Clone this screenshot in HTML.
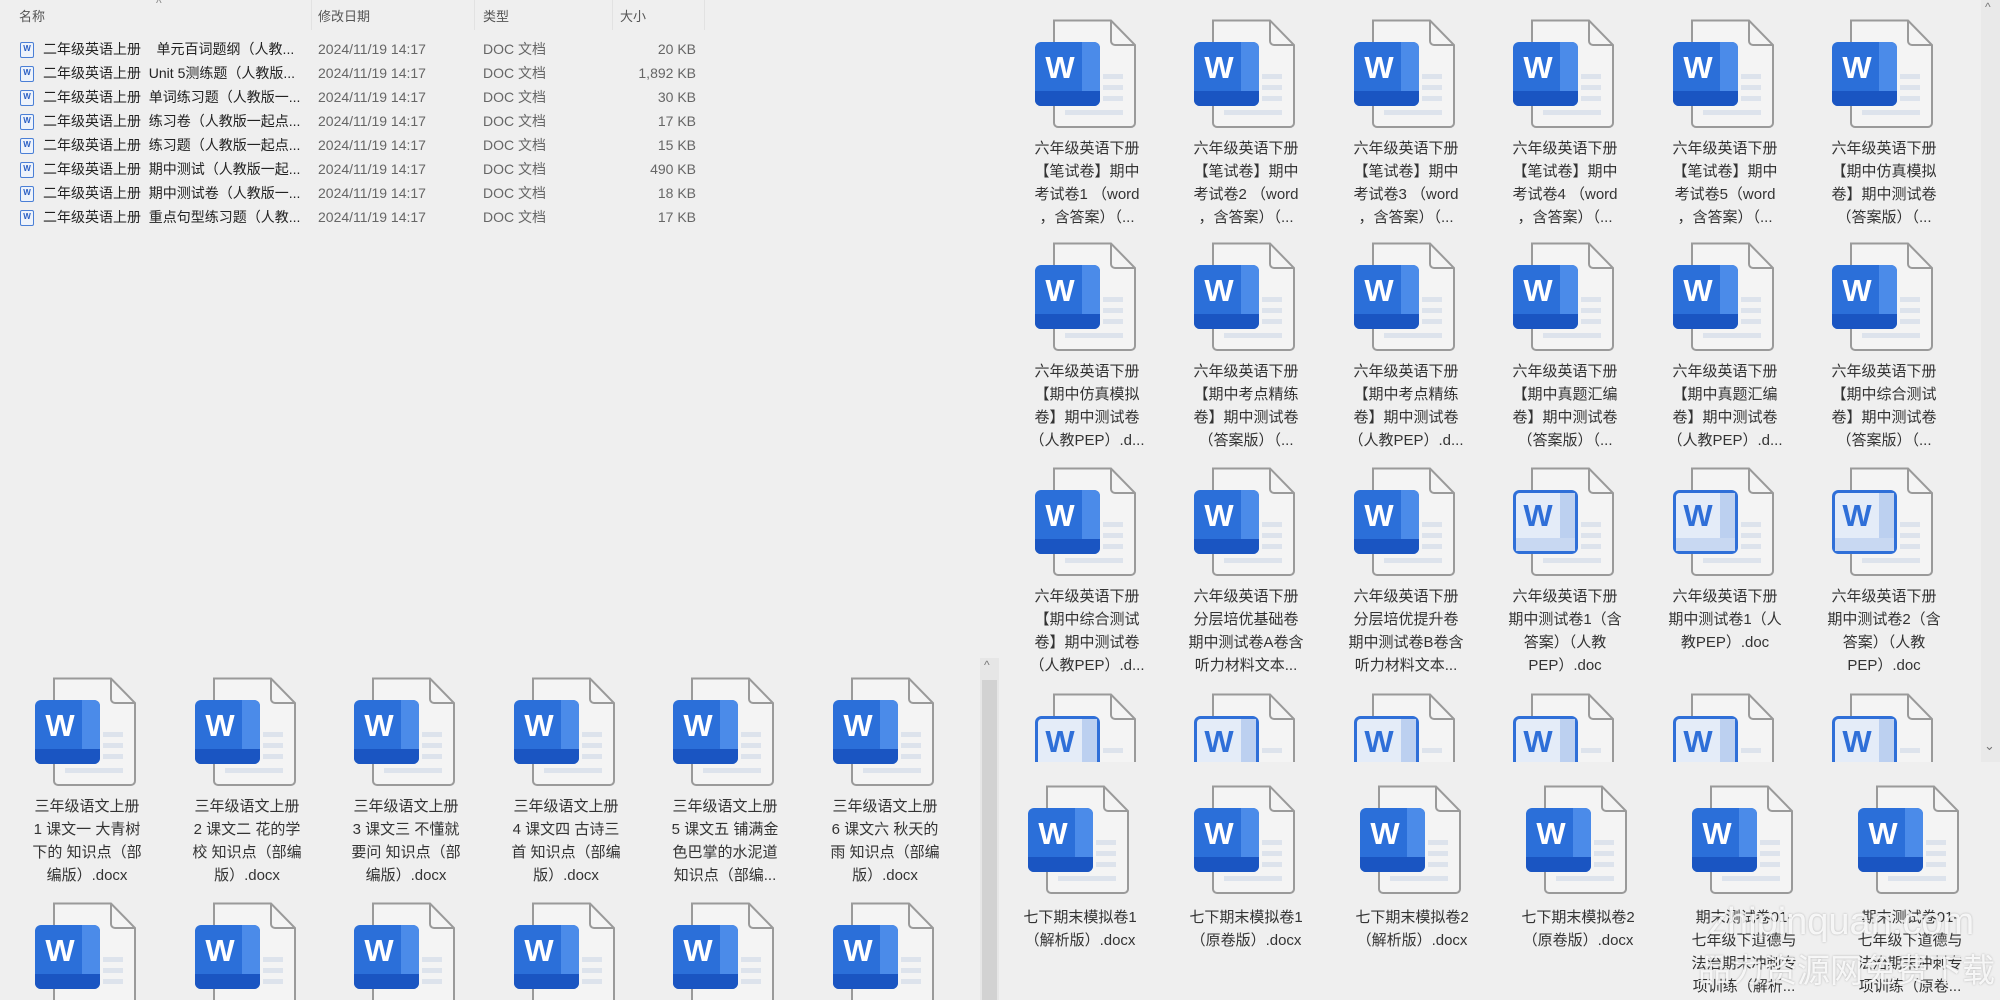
<!DOCTYPE html>
<html><head><meta charset="utf-8">
<style>
*{margin:0;padding:0;box-sizing:border-box}
html{width:2000px;height:1000px;overflow:hidden}
body{width:2000px;height:1000px;overflow:hidden;background:#efefef;font-family:"Liberation Sans","Noto Sans CJK SC",sans-serif;position:relative;color:#333}
.hd{position:absolute;top:6px;font-size:13px;color:#555}
.dv{position:absolute;top:0;width:1px;height:30px;background:#e2e2e2}
.row{position:absolute;left:0;height:24px;font-size:14px;line-height:24px;width:720px}
.row span{position:absolute;white-space:nowrap}
.row .n{left:43px;color:#222}
.row .d{left:318px;color:#666}
.row .ty{left:483px;color:#666}
.row .s{right:24px;color:#666}
.ic{position:absolute;left:20px;top:5px;width:14px;height:16px;border:1.5px solid #4a7fd6;border-radius:2px;background:#eef3fb;font-size:8px;line-height:12px;text-align:center;color:#2a5fc4;font-weight:bold}
.it{position:absolute;width:110px;height:230px}
.it svg{position:absolute;left:0;top:0;overflow:visible}
.t{position:absolute;left:-20px;top:118px;width:144px;text-align:center;font-size:15px;line-height:23px;color:#333;white-space:nowrap}
.clip{position:absolute;overflow:hidden}
.wm{position:absolute;color:rgba(255,255,255,0.85);text-shadow:0 0 2px rgba(0,0,0,0.25);white-space:nowrap}
</style></head><body>

<div class="hd" style="left:19px">名称</div>
<div class="hd" style="left:156px;top:-4px;font-size:12px;color:#888">^</div>
<div class="dv" style="left:311px"></div>
<div class="hd" style="left:318px">修改日期</div>
<div class="dv" style="left:474px"></div>
<div class="hd" style="left:483px">类型</div>
<div class="dv" style="left:612px"></div>
<div class="hd" style="left:620px">大小</div>
<div class="dv" style="left:704px"></div>

<div class="row" style="top:37px"><div class="ic">W</div><span class="n">二年级英语上册&nbsp;&nbsp;&nbsp;&nbsp;单元百词题纲（人教...</span><span class="d">2024/11/19 14:17</span><span class="ty">DOC 文档</span><span class="s">20 KB</span></div>
<div class="row" style="top:61px"><div class="ic">W</div><span class="n">二年级英语上册&nbsp;&nbsp;Unit 5测练题（人教版...</span><span class="d">2024/11/19 14:17</span><span class="ty">DOC 文档</span><span class="s">1,892 KB</span></div>
<div class="row" style="top:85px"><div class="ic">W</div><span class="n">二年级英语上册&nbsp;&nbsp;单词练习题（人教版一...</span><span class="d">2024/11/19 14:17</span><span class="ty">DOC 文档</span><span class="s">30 KB</span></div>
<div class="row" style="top:109px"><div class="ic">W</div><span class="n">二年级英语上册&nbsp;&nbsp;练习卷（人教版一起点...</span><span class="d">2024/11/19 14:17</span><span class="ty">DOC 文档</span><span class="s">17 KB</span></div>
<div class="row" style="top:133px"><div class="ic">W</div><span class="n">二年级英语上册&nbsp;&nbsp;练习题（人教版一起点...</span><span class="d">2024/11/19 14:17</span><span class="ty">DOC 文档</span><span class="s">15 KB</span></div>
<div class="row" style="top:157px"><div class="ic">W</div><span class="n">二年级英语上册&nbsp;&nbsp;期中测试（人教版一起...</span><span class="d">2024/11/19 14:17</span><span class="ty">DOC 文档</span><span class="s">490 KB</span></div>
<div class="row" style="top:181px"><div class="ic">W</div><span class="n">二年级英语上册&nbsp;&nbsp;期中测试卷（人教版一...</span><span class="d">2024/11/19 14:17</span><span class="ty">DOC 文档</span><span class="s">18 KB</span></div>
<div class="row" style="top:205px"><div class="ic">W</div><span class="n">二年级英语上册&nbsp;&nbsp;重点句型练习题（人教...</span><span class="d">2024/11/19 14:17</span><span class="ty">DOC 文档</span><span class="s">17 KB</span></div>

<div class="clip" style="left:0;top:0;width:2000px;height:762px">
<div style="position:absolute;left:1981px;top:0;width:19px;height:762px;background:#e9e9e9"></div>
<div style="position:absolute;left:1985px;top:0;font-size:12px;color:#777">^</div>
<div style="position:absolute;left:1984px;top:738px;font-size:13px;color:#777">⌄</div>

<div class="it" style="left:1035px;top:19px"><svg width="102" height="112"><path d="M19 1.5H76L100 26V104a4 4 0 0 1-4 4H23a4 4 0 0 1-4-4Z" fill="#f4f4f4" stroke="#9a9a9a" stroke-width="2"/><path d="M76 1.5V22a4 4 0 0 0 4 4H100" fill="none" stroke="#9a9a9a" stroke-width="2"/><g fill="#dde3ec"><rect x="68" y="55" width="20" height="5"/><rect x="68" y="66" width="20" height="5"/><rect x="68" y="77" width="20" height="5"/><rect x="30" y="91" width="58" height="5"/></g><rect x="0" y="23" width="65" height="64" rx="6" fill="#2b6fd9"/><path d="M47 23H59a6 6 0 0 1 6 6V72H47Z" fill="#4b8be9"/><path d="M0 72H65V81a6 6 0 0 1-6 6H6a6 6 0 0 1-6-6Z" fill="#1a55c2"/><text x="25" y="59" font-family="Liberation Sans" font-weight="bold" font-size="31" fill="#fff" text-anchor="middle">W</text></svg><div class="t">六年级英语下册<br>【笔试卷】期中<br>考试卷1 （word<br>，含答案）（...</div></div>
<div class="it" style="left:1194px;top:19px"><svg width="102" height="112"><path d="M19 1.5H76L100 26V104a4 4 0 0 1-4 4H23a4 4 0 0 1-4-4Z" fill="#f4f4f4" stroke="#9a9a9a" stroke-width="2"/><path d="M76 1.5V22a4 4 0 0 0 4 4H100" fill="none" stroke="#9a9a9a" stroke-width="2"/><g fill="#dde3ec"><rect x="68" y="55" width="20" height="5"/><rect x="68" y="66" width="20" height="5"/><rect x="68" y="77" width="20" height="5"/><rect x="30" y="91" width="58" height="5"/></g><rect x="0" y="23" width="65" height="64" rx="6" fill="#2b6fd9"/><path d="M47 23H59a6 6 0 0 1 6 6V72H47Z" fill="#4b8be9"/><path d="M0 72H65V81a6 6 0 0 1-6 6H6a6 6 0 0 1-6-6Z" fill="#1a55c2"/><text x="25" y="59" font-family="Liberation Sans" font-weight="bold" font-size="31" fill="#fff" text-anchor="middle">W</text></svg><div class="t">六年级英语下册<br>【笔试卷】期中<br>考试卷2 （word<br>，含答案）（...</div></div>
<div class="it" style="left:1354px;top:19px"><svg width="102" height="112"><path d="M19 1.5H76L100 26V104a4 4 0 0 1-4 4H23a4 4 0 0 1-4-4Z" fill="#f4f4f4" stroke="#9a9a9a" stroke-width="2"/><path d="M76 1.5V22a4 4 0 0 0 4 4H100" fill="none" stroke="#9a9a9a" stroke-width="2"/><g fill="#dde3ec"><rect x="68" y="55" width="20" height="5"/><rect x="68" y="66" width="20" height="5"/><rect x="68" y="77" width="20" height="5"/><rect x="30" y="91" width="58" height="5"/></g><rect x="0" y="23" width="65" height="64" rx="6" fill="#2b6fd9"/><path d="M47 23H59a6 6 0 0 1 6 6V72H47Z" fill="#4b8be9"/><path d="M0 72H65V81a6 6 0 0 1-6 6H6a6 6 0 0 1-6-6Z" fill="#1a55c2"/><text x="25" y="59" font-family="Liberation Sans" font-weight="bold" font-size="31" fill="#fff" text-anchor="middle">W</text></svg><div class="t">六年级英语下册<br>【笔试卷】期中<br>考试卷3 （word<br>，含答案）（...</div></div>
<div class="it" style="left:1513px;top:19px"><svg width="102" height="112"><path d="M19 1.5H76L100 26V104a4 4 0 0 1-4 4H23a4 4 0 0 1-4-4Z" fill="#f4f4f4" stroke="#9a9a9a" stroke-width="2"/><path d="M76 1.5V22a4 4 0 0 0 4 4H100" fill="none" stroke="#9a9a9a" stroke-width="2"/><g fill="#dde3ec"><rect x="68" y="55" width="20" height="5"/><rect x="68" y="66" width="20" height="5"/><rect x="68" y="77" width="20" height="5"/><rect x="30" y="91" width="58" height="5"/></g><rect x="0" y="23" width="65" height="64" rx="6" fill="#2b6fd9"/><path d="M47 23H59a6 6 0 0 1 6 6V72H47Z" fill="#4b8be9"/><path d="M0 72H65V81a6 6 0 0 1-6 6H6a6 6 0 0 1-6-6Z" fill="#1a55c2"/><text x="25" y="59" font-family="Liberation Sans" font-weight="bold" font-size="31" fill="#fff" text-anchor="middle">W</text></svg><div class="t">六年级英语下册<br>【笔试卷】期中<br>考试卷4 （word<br>，含答案）（...</div></div>
<div class="it" style="left:1673px;top:19px"><svg width="102" height="112"><path d="M19 1.5H76L100 26V104a4 4 0 0 1-4 4H23a4 4 0 0 1-4-4Z" fill="#f4f4f4" stroke="#9a9a9a" stroke-width="2"/><path d="M76 1.5V22a4 4 0 0 0 4 4H100" fill="none" stroke="#9a9a9a" stroke-width="2"/><g fill="#dde3ec"><rect x="68" y="55" width="20" height="5"/><rect x="68" y="66" width="20" height="5"/><rect x="68" y="77" width="20" height="5"/><rect x="30" y="91" width="58" height="5"/></g><rect x="0" y="23" width="65" height="64" rx="6" fill="#2b6fd9"/><path d="M47 23H59a6 6 0 0 1 6 6V72H47Z" fill="#4b8be9"/><path d="M0 72H65V81a6 6 0 0 1-6 6H6a6 6 0 0 1-6-6Z" fill="#1a55c2"/><text x="25" y="59" font-family="Liberation Sans" font-weight="bold" font-size="31" fill="#fff" text-anchor="middle">W</text></svg><div class="t">六年级英语下册<br>【笔试卷】期中<br>考试卷5（word<br>，含答案）（...</div></div>
<div class="it" style="left:1832px;top:19px"><svg width="102" height="112"><path d="M19 1.5H76L100 26V104a4 4 0 0 1-4 4H23a4 4 0 0 1-4-4Z" fill="#f4f4f4" stroke="#9a9a9a" stroke-width="2"/><path d="M76 1.5V22a4 4 0 0 0 4 4H100" fill="none" stroke="#9a9a9a" stroke-width="2"/><g fill="#dde3ec"><rect x="68" y="55" width="20" height="5"/><rect x="68" y="66" width="20" height="5"/><rect x="68" y="77" width="20" height="5"/><rect x="30" y="91" width="58" height="5"/></g><rect x="0" y="23" width="65" height="64" rx="6" fill="#2b6fd9"/><path d="M47 23H59a6 6 0 0 1 6 6V72H47Z" fill="#4b8be9"/><path d="M0 72H65V81a6 6 0 0 1-6 6H6a6 6 0 0 1-6-6Z" fill="#1a55c2"/><text x="25" y="59" font-family="Liberation Sans" font-weight="bold" font-size="31" fill="#fff" text-anchor="middle">W</text></svg><div class="t">六年级英语下册<br>【期中仿真模拟<br>卷】期中测试卷<br>（答案版）（...</div></div>

<div class="it" style="left:1035px;top:242px"><svg width="102" height="112"><path d="M19 1.5H76L100 26V104a4 4 0 0 1-4 4H23a4 4 0 0 1-4-4Z" fill="#f4f4f4" stroke="#9a9a9a" stroke-width="2"/><path d="M76 1.5V22a4 4 0 0 0 4 4H100" fill="none" stroke="#9a9a9a" stroke-width="2"/><g fill="#dde3ec"><rect x="68" y="55" width="20" height="5"/><rect x="68" y="66" width="20" height="5"/><rect x="68" y="77" width="20" height="5"/><rect x="30" y="91" width="58" height="5"/></g><rect x="0" y="23" width="65" height="64" rx="6" fill="#2b6fd9"/><path d="M47 23H59a6 6 0 0 1 6 6V72H47Z" fill="#4b8be9"/><path d="M0 72H65V81a6 6 0 0 1-6 6H6a6 6 0 0 1-6-6Z" fill="#1a55c2"/><text x="25" y="59" font-family="Liberation Sans" font-weight="bold" font-size="31" fill="#fff" text-anchor="middle">W</text></svg><div class="t">六年级英语下册<br>【期中仿真模拟<br>卷】期中测试卷<br>（人教PEP）.d...</div></div>
<div class="it" style="left:1194px;top:242px"><svg width="102" height="112"><path d="M19 1.5H76L100 26V104a4 4 0 0 1-4 4H23a4 4 0 0 1-4-4Z" fill="#f4f4f4" stroke="#9a9a9a" stroke-width="2"/><path d="M76 1.5V22a4 4 0 0 0 4 4H100" fill="none" stroke="#9a9a9a" stroke-width="2"/><g fill="#dde3ec"><rect x="68" y="55" width="20" height="5"/><rect x="68" y="66" width="20" height="5"/><rect x="68" y="77" width="20" height="5"/><rect x="30" y="91" width="58" height="5"/></g><rect x="0" y="23" width="65" height="64" rx="6" fill="#2b6fd9"/><path d="M47 23H59a6 6 0 0 1 6 6V72H47Z" fill="#4b8be9"/><path d="M0 72H65V81a6 6 0 0 1-6 6H6a6 6 0 0 1-6-6Z" fill="#1a55c2"/><text x="25" y="59" font-family="Liberation Sans" font-weight="bold" font-size="31" fill="#fff" text-anchor="middle">W</text></svg><div class="t">六年级英语下册<br>【期中考点精练<br>卷】期中测试卷<br>（答案版）（...</div></div>
<div class="it" style="left:1354px;top:242px"><svg width="102" height="112"><path d="M19 1.5H76L100 26V104a4 4 0 0 1-4 4H23a4 4 0 0 1-4-4Z" fill="#f4f4f4" stroke="#9a9a9a" stroke-width="2"/><path d="M76 1.5V22a4 4 0 0 0 4 4H100" fill="none" stroke="#9a9a9a" stroke-width="2"/><g fill="#dde3ec"><rect x="68" y="55" width="20" height="5"/><rect x="68" y="66" width="20" height="5"/><rect x="68" y="77" width="20" height="5"/><rect x="30" y="91" width="58" height="5"/></g><rect x="0" y="23" width="65" height="64" rx="6" fill="#2b6fd9"/><path d="M47 23H59a6 6 0 0 1 6 6V72H47Z" fill="#4b8be9"/><path d="M0 72H65V81a6 6 0 0 1-6 6H6a6 6 0 0 1-6-6Z" fill="#1a55c2"/><text x="25" y="59" font-family="Liberation Sans" font-weight="bold" font-size="31" fill="#fff" text-anchor="middle">W</text></svg><div class="t">六年级英语下册<br>【期中考点精练<br>卷】期中测试卷<br>（人教PEP）.d...</div></div>
<div class="it" style="left:1513px;top:242px"><svg width="102" height="112"><path d="M19 1.5H76L100 26V104a4 4 0 0 1-4 4H23a4 4 0 0 1-4-4Z" fill="#f4f4f4" stroke="#9a9a9a" stroke-width="2"/><path d="M76 1.5V22a4 4 0 0 0 4 4H100" fill="none" stroke="#9a9a9a" stroke-width="2"/><g fill="#dde3ec"><rect x="68" y="55" width="20" height="5"/><rect x="68" y="66" width="20" height="5"/><rect x="68" y="77" width="20" height="5"/><rect x="30" y="91" width="58" height="5"/></g><rect x="0" y="23" width="65" height="64" rx="6" fill="#2b6fd9"/><path d="M47 23H59a6 6 0 0 1 6 6V72H47Z" fill="#4b8be9"/><path d="M0 72H65V81a6 6 0 0 1-6 6H6a6 6 0 0 1-6-6Z" fill="#1a55c2"/><text x="25" y="59" font-family="Liberation Sans" font-weight="bold" font-size="31" fill="#fff" text-anchor="middle">W</text></svg><div class="t">六年级英语下册<br>【期中真题汇编<br>卷】期中测试卷<br>（答案版）（...</div></div>
<div class="it" style="left:1673px;top:242px"><svg width="102" height="112"><path d="M19 1.5H76L100 26V104a4 4 0 0 1-4 4H23a4 4 0 0 1-4-4Z" fill="#f4f4f4" stroke="#9a9a9a" stroke-width="2"/><path d="M76 1.5V22a4 4 0 0 0 4 4H100" fill="none" stroke="#9a9a9a" stroke-width="2"/><g fill="#dde3ec"><rect x="68" y="55" width="20" height="5"/><rect x="68" y="66" width="20" height="5"/><rect x="68" y="77" width="20" height="5"/><rect x="30" y="91" width="58" height="5"/></g><rect x="0" y="23" width="65" height="64" rx="6" fill="#2b6fd9"/><path d="M47 23H59a6 6 0 0 1 6 6V72H47Z" fill="#4b8be9"/><path d="M0 72H65V81a6 6 0 0 1-6 6H6a6 6 0 0 1-6-6Z" fill="#1a55c2"/><text x="25" y="59" font-family="Liberation Sans" font-weight="bold" font-size="31" fill="#fff" text-anchor="middle">W</text></svg><div class="t">六年级英语下册<br>【期中真题汇编<br>卷】期中测试卷<br>（人教PEP）.d...</div></div>
<div class="it" style="left:1832px;top:242px"><svg width="102" height="112"><path d="M19 1.5H76L100 26V104a4 4 0 0 1-4 4H23a4 4 0 0 1-4-4Z" fill="#f4f4f4" stroke="#9a9a9a" stroke-width="2"/><path d="M76 1.5V22a4 4 0 0 0 4 4H100" fill="none" stroke="#9a9a9a" stroke-width="2"/><g fill="#dde3ec"><rect x="68" y="55" width="20" height="5"/><rect x="68" y="66" width="20" height="5"/><rect x="68" y="77" width="20" height="5"/><rect x="30" y="91" width="58" height="5"/></g><rect x="0" y="23" width="65" height="64" rx="6" fill="#2b6fd9"/><path d="M47 23H59a6 6 0 0 1 6 6V72H47Z" fill="#4b8be9"/><path d="M0 72H65V81a6 6 0 0 1-6 6H6a6 6 0 0 1-6-6Z" fill="#1a55c2"/><text x="25" y="59" font-family="Liberation Sans" font-weight="bold" font-size="31" fill="#fff" text-anchor="middle">W</text></svg><div class="t">六年级英语下册<br>【期中综合测试<br>卷】期中测试卷<br>（答案版）（...</div></div>

<div class="it" style="left:1035px;top:467px"><svg width="102" height="112"><path d="M19 1.5H76L100 26V104a4 4 0 0 1-4 4H23a4 4 0 0 1-4-4Z" fill="#f4f4f4" stroke="#9a9a9a" stroke-width="2"/><path d="M76 1.5V22a4 4 0 0 0 4 4H100" fill="none" stroke="#9a9a9a" stroke-width="2"/><g fill="#dde3ec"><rect x="68" y="55" width="20" height="5"/><rect x="68" y="66" width="20" height="5"/><rect x="68" y="77" width="20" height="5"/><rect x="30" y="91" width="58" height="5"/></g><rect x="0" y="23" width="65" height="64" rx="6" fill="#2b6fd9"/><path d="M47 23H59a6 6 0 0 1 6 6V72H47Z" fill="#4b8be9"/><path d="M0 72H65V81a6 6 0 0 1-6 6H6a6 6 0 0 1-6-6Z" fill="#1a55c2"/><text x="25" y="59" font-family="Liberation Sans" font-weight="bold" font-size="31" fill="#fff" text-anchor="middle">W</text></svg><div class="t">六年级英语下册<br>【期中综合测试<br>卷】期中测试卷<br>（人教PEP）.d...</div></div>
<div class="it" style="left:1194px;top:467px"><svg width="102" height="112"><path d="M19 1.5H76L100 26V104a4 4 0 0 1-4 4H23a4 4 0 0 1-4-4Z" fill="#f4f4f4" stroke="#9a9a9a" stroke-width="2"/><path d="M76 1.5V22a4 4 0 0 0 4 4H100" fill="none" stroke="#9a9a9a" stroke-width="2"/><g fill="#dde3ec"><rect x="68" y="55" width="20" height="5"/><rect x="68" y="66" width="20" height="5"/><rect x="68" y="77" width="20" height="5"/><rect x="30" y="91" width="58" height="5"/></g><rect x="0" y="23" width="65" height="64" rx="6" fill="#2b6fd9"/><path d="M47 23H59a6 6 0 0 1 6 6V72H47Z" fill="#4b8be9"/><path d="M0 72H65V81a6 6 0 0 1-6 6H6a6 6 0 0 1-6-6Z" fill="#1a55c2"/><text x="25" y="59" font-family="Liberation Sans" font-weight="bold" font-size="31" fill="#fff" text-anchor="middle">W</text></svg><div class="t">六年级英语下册<br>分层培优基础卷<br>期中测试卷A卷含<br>听力材料文本...</div></div>
<div class="it" style="left:1354px;top:467px"><svg width="102" height="112"><path d="M19 1.5H76L100 26V104a4 4 0 0 1-4 4H23a4 4 0 0 1-4-4Z" fill="#f4f4f4" stroke="#9a9a9a" stroke-width="2"/><path d="M76 1.5V22a4 4 0 0 0 4 4H100" fill="none" stroke="#9a9a9a" stroke-width="2"/><g fill="#dde3ec"><rect x="68" y="55" width="20" height="5"/><rect x="68" y="66" width="20" height="5"/><rect x="68" y="77" width="20" height="5"/><rect x="30" y="91" width="58" height="5"/></g><rect x="0" y="23" width="65" height="64" rx="6" fill="#2b6fd9"/><path d="M47 23H59a6 6 0 0 1 6 6V72H47Z" fill="#4b8be9"/><path d="M0 72H65V81a6 6 0 0 1-6 6H6a6 6 0 0 1-6-6Z" fill="#1a55c2"/><text x="25" y="59" font-family="Liberation Sans" font-weight="bold" font-size="31" fill="#fff" text-anchor="middle">W</text></svg><div class="t">六年级英语下册<br>分层培优提升卷<br>期中测试卷B卷含<br>听力材料文本...</div></div>
<div class="it" style="left:1513px;top:467px"><svg width="102" height="112"><path d="M19 1.5H76L100 26V104a4 4 0 0 1-4 4H23a4 4 0 0 1-4-4Z" fill="#f4f4f4" stroke="#9a9a9a" stroke-width="2"/><path d="M76 1.5V22a4 4 0 0 0 4 4H100" fill="none" stroke="#9a9a9a" stroke-width="2"/><g fill="#dde3ec"><rect x="68" y="55" width="20" height="5"/><rect x="68" y="66" width="20" height="5"/><rect x="68" y="77" width="20" height="5"/><rect x="30" y="91" width="58" height="5"/></g><rect x="1.5" y="24.5" width="62" height="61" rx="5" fill="#e4ecf8" stroke="#2f6fd8" stroke-width="3"/><rect x="47" y="26" width="15" height="45" fill="#bcd0f0"/><rect x="3" y="71" width="59" height="13" fill="#c8d8f2"/><text x="25" y="59" font-family="Liberation Sans" font-weight="bold" font-size="31" fill="#2f6fd8" text-anchor="middle">W</text></svg><div class="t">六年级英语下册<br>期中测试卷1（含<br>答案）（人教<br>PEP）.doc</div></div>
<div class="it" style="left:1673px;top:467px"><svg width="102" height="112"><path d="M19 1.5H76L100 26V104a4 4 0 0 1-4 4H23a4 4 0 0 1-4-4Z" fill="#f4f4f4" stroke="#9a9a9a" stroke-width="2"/><path d="M76 1.5V22a4 4 0 0 0 4 4H100" fill="none" stroke="#9a9a9a" stroke-width="2"/><g fill="#dde3ec"><rect x="68" y="55" width="20" height="5"/><rect x="68" y="66" width="20" height="5"/><rect x="68" y="77" width="20" height="5"/><rect x="30" y="91" width="58" height="5"/></g><rect x="1.5" y="24.5" width="62" height="61" rx="5" fill="#e4ecf8" stroke="#2f6fd8" stroke-width="3"/><rect x="47" y="26" width="15" height="45" fill="#bcd0f0"/><rect x="3" y="71" width="59" height="13" fill="#c8d8f2"/><text x="25" y="59" font-family="Liberation Sans" font-weight="bold" font-size="31" fill="#2f6fd8" text-anchor="middle">W</text></svg><div class="t">六年级英语下册<br>期中测试卷1（人<br>教PEP）.doc</div></div>
<div class="it" style="left:1832px;top:467px"><svg width="102" height="112"><path d="M19 1.5H76L100 26V104a4 4 0 0 1-4 4H23a4 4 0 0 1-4-4Z" fill="#f4f4f4" stroke="#9a9a9a" stroke-width="2"/><path d="M76 1.5V22a4 4 0 0 0 4 4H100" fill="none" stroke="#9a9a9a" stroke-width="2"/><g fill="#dde3ec"><rect x="68" y="55" width="20" height="5"/><rect x="68" y="66" width="20" height="5"/><rect x="68" y="77" width="20" height="5"/><rect x="30" y="91" width="58" height="5"/></g><rect x="1.5" y="24.5" width="62" height="61" rx="5" fill="#e4ecf8" stroke="#2f6fd8" stroke-width="3"/><rect x="47" y="26" width="15" height="45" fill="#bcd0f0"/><rect x="3" y="71" width="59" height="13" fill="#c8d8f2"/><text x="25" y="59" font-family="Liberation Sans" font-weight="bold" font-size="31" fill="#2f6fd8" text-anchor="middle">W</text></svg><div class="t">六年级英语下册<br>期中测试卷2（含<br>答案）（人教<br>PEP）.doc</div></div>

<div class="it" style="left:1035px;top:693px"><svg width="102" height="112"><path d="M19 1.5H76L100 26V104a4 4 0 0 1-4 4H23a4 4 0 0 1-4-4Z" fill="#f4f4f4" stroke="#9a9a9a" stroke-width="2"/><path d="M76 1.5V22a4 4 0 0 0 4 4H100" fill="none" stroke="#9a9a9a" stroke-width="2"/><g fill="#dde3ec"><rect x="68" y="55" width="20" height="5"/></g><rect x="1.5" y="24.5" width="62" height="61" rx="5" fill="#e4ecf8" stroke="#2f6fd8" stroke-width="3"/><rect x="47" y="26" width="15" height="45" fill="#bcd0f0"/><text x="25" y="59" font-family="Liberation Sans" font-weight="bold" font-size="31" fill="#2f6fd8" text-anchor="middle">W</text></svg></div>
<div class="it" style="left:1194px;top:693px"><svg width="102" height="112"><path d="M19 1.5H76L100 26V104a4 4 0 0 1-4 4H23a4 4 0 0 1-4-4Z" fill="#f4f4f4" stroke="#9a9a9a" stroke-width="2"/><path d="M76 1.5V22a4 4 0 0 0 4 4H100" fill="none" stroke="#9a9a9a" stroke-width="2"/><g fill="#dde3ec"><rect x="68" y="55" width="20" height="5"/></g><rect x="1.5" y="24.5" width="62" height="61" rx="5" fill="#e4ecf8" stroke="#2f6fd8" stroke-width="3"/><rect x="47" y="26" width="15" height="45" fill="#bcd0f0"/><text x="25" y="59" font-family="Liberation Sans" font-weight="bold" font-size="31" fill="#2f6fd8" text-anchor="middle">W</text></svg></div>
<div class="it" style="left:1354px;top:693px"><svg width="102" height="112"><path d="M19 1.5H76L100 26V104a4 4 0 0 1-4 4H23a4 4 0 0 1-4-4Z" fill="#f4f4f4" stroke="#9a9a9a" stroke-width="2"/><path d="M76 1.5V22a4 4 0 0 0 4 4H100" fill="none" stroke="#9a9a9a" stroke-width="2"/><g fill="#dde3ec"><rect x="68" y="55" width="20" height="5"/></g><rect x="1.5" y="24.5" width="62" height="61" rx="5" fill="#e4ecf8" stroke="#2f6fd8" stroke-width="3"/><rect x="47" y="26" width="15" height="45" fill="#bcd0f0"/><text x="25" y="59" font-family="Liberation Sans" font-weight="bold" font-size="31" fill="#2f6fd8" text-anchor="middle">W</text></svg></div>
<div class="it" style="left:1513px;top:693px"><svg width="102" height="112"><path d="M19 1.5H76L100 26V104a4 4 0 0 1-4 4H23a4 4 0 0 1-4-4Z" fill="#f4f4f4" stroke="#9a9a9a" stroke-width="2"/><path d="M76 1.5V22a4 4 0 0 0 4 4H100" fill="none" stroke="#9a9a9a" stroke-width="2"/><g fill="#dde3ec"><rect x="68" y="55" width="20" height="5"/></g><rect x="1.5" y="24.5" width="62" height="61" rx="5" fill="#e4ecf8" stroke="#2f6fd8" stroke-width="3"/><rect x="47" y="26" width="15" height="45" fill="#bcd0f0"/><text x="25" y="59" font-family="Liberation Sans" font-weight="bold" font-size="31" fill="#2f6fd8" text-anchor="middle">W</text></svg></div>
<div class="it" style="left:1673px;top:693px"><svg width="102" height="112"><path d="M19 1.5H76L100 26V104a4 4 0 0 1-4 4H23a4 4 0 0 1-4-4Z" fill="#f4f4f4" stroke="#9a9a9a" stroke-width="2"/><path d="M76 1.5V22a4 4 0 0 0 4 4H100" fill="none" stroke="#9a9a9a" stroke-width="2"/><g fill="#dde3ec"><rect x="68" y="55" width="20" height="5"/></g><rect x="1.5" y="24.5" width="62" height="61" rx="5" fill="#e4ecf8" stroke="#2f6fd8" stroke-width="3"/><rect x="47" y="26" width="15" height="45" fill="#bcd0f0"/><text x="25" y="59" font-family="Liberation Sans" font-weight="bold" font-size="31" fill="#2f6fd8" text-anchor="middle">W</text></svg></div>
<div class="it" style="left:1832px;top:693px"><svg width="102" height="112"><path d="M19 1.5H76L100 26V104a4 4 0 0 1-4 4H23a4 4 0 0 1-4-4Z" fill="#f4f4f4" stroke="#9a9a9a" stroke-width="2"/><path d="M76 1.5V22a4 4 0 0 0 4 4H100" fill="none" stroke="#9a9a9a" stroke-width="2"/><g fill="#dde3ec"><rect x="68" y="55" width="20" height="5"/></g><rect x="1.5" y="24.5" width="62" height="61" rx="5" fill="#e4ecf8" stroke="#2f6fd8" stroke-width="3"/><rect x="47" y="26" width="15" height="45" fill="#bcd0f0"/><text x="25" y="59" font-family="Liberation Sans" font-weight="bold" font-size="31" fill="#2f6fd8" text-anchor="middle">W</text></svg></div>
</div>

<div style="position:absolute;left:980px;top:658px;width:19px;height:342px;background:#e6e6e6"></div>
<div style="position:absolute;left:982px;top:680px;width:15px;height:320px;background:#d2d2d2"></div>
<div style="position:absolute;left:984px;top:658px;font-size:12px;color:#777">^</div>

<div class="it" style="left:35px;top:677px"><svg width="102" height="112"><path d="M19 1.5H76L100 26V104a4 4 0 0 1-4 4H23a4 4 0 0 1-4-4Z" fill="#f4f4f4" stroke="#9a9a9a" stroke-width="2"/><path d="M76 1.5V22a4 4 0 0 0 4 4H100" fill="none" stroke="#9a9a9a" stroke-width="2"/><g fill="#dde3ec"><rect x="68" y="55" width="20" height="5"/><rect x="68" y="66" width="20" height="5"/><rect x="68" y="77" width="20" height="5"/><rect x="30" y="91" width="58" height="5"/></g><rect x="0" y="23" width="65" height="64" rx="6" fill="#2b6fd9"/><path d="M47 23H59a6 6 0 0 1 6 6V72H47Z" fill="#4b8be9"/><path d="M0 72H65V81a6 6 0 0 1-6 6H6a6 6 0 0 1-6-6Z" fill="#1a55c2"/><text x="25" y="59" font-family="Liberation Sans" font-weight="bold" font-size="31" fill="#fff" text-anchor="middle">W</text></svg><div class="t">三年级语文上册<br>1 课文一 大青树<br>下的 知识点（部<br>编版）.docx</div></div>
<div class="it" style="left:195px;top:677px"><svg width="102" height="112"><path d="M19 1.5H76L100 26V104a4 4 0 0 1-4 4H23a4 4 0 0 1-4-4Z" fill="#f4f4f4" stroke="#9a9a9a" stroke-width="2"/><path d="M76 1.5V22a4 4 0 0 0 4 4H100" fill="none" stroke="#9a9a9a" stroke-width="2"/><g fill="#dde3ec"><rect x="68" y="55" width="20" height="5"/><rect x="68" y="66" width="20" height="5"/><rect x="68" y="77" width="20" height="5"/><rect x="30" y="91" width="58" height="5"/></g><rect x="0" y="23" width="65" height="64" rx="6" fill="#2b6fd9"/><path d="M47 23H59a6 6 0 0 1 6 6V72H47Z" fill="#4b8be9"/><path d="M0 72H65V81a6 6 0 0 1-6 6H6a6 6 0 0 1-6-6Z" fill="#1a55c2"/><text x="25" y="59" font-family="Liberation Sans" font-weight="bold" font-size="31" fill="#fff" text-anchor="middle">W</text></svg><div class="t">三年级语文上册<br>2 课文二 花的学<br>校 知识点（部编<br>版）.docx</div></div>
<div class="it" style="left:354px;top:677px"><svg width="102" height="112"><path d="M19 1.5H76L100 26V104a4 4 0 0 1-4 4H23a4 4 0 0 1-4-4Z" fill="#f4f4f4" stroke="#9a9a9a" stroke-width="2"/><path d="M76 1.5V22a4 4 0 0 0 4 4H100" fill="none" stroke="#9a9a9a" stroke-width="2"/><g fill="#dde3ec"><rect x="68" y="55" width="20" height="5"/><rect x="68" y="66" width="20" height="5"/><rect x="68" y="77" width="20" height="5"/><rect x="30" y="91" width="58" height="5"/></g><rect x="0" y="23" width="65" height="64" rx="6" fill="#2b6fd9"/><path d="M47 23H59a6 6 0 0 1 6 6V72H47Z" fill="#4b8be9"/><path d="M0 72H65V81a6 6 0 0 1-6 6H6a6 6 0 0 1-6-6Z" fill="#1a55c2"/><text x="25" y="59" font-family="Liberation Sans" font-weight="bold" font-size="31" fill="#fff" text-anchor="middle">W</text></svg><div class="t">三年级语文上册<br>3 课文三 不懂就<br>要问 知识点（部<br>编版）.docx</div></div>
<div class="it" style="left:514px;top:677px"><svg width="102" height="112"><path d="M19 1.5H76L100 26V104a4 4 0 0 1-4 4H23a4 4 0 0 1-4-4Z" fill="#f4f4f4" stroke="#9a9a9a" stroke-width="2"/><path d="M76 1.5V22a4 4 0 0 0 4 4H100" fill="none" stroke="#9a9a9a" stroke-width="2"/><g fill="#dde3ec"><rect x="68" y="55" width="20" height="5"/><rect x="68" y="66" width="20" height="5"/><rect x="68" y="77" width="20" height="5"/><rect x="30" y="91" width="58" height="5"/></g><rect x="0" y="23" width="65" height="64" rx="6" fill="#2b6fd9"/><path d="M47 23H59a6 6 0 0 1 6 6V72H47Z" fill="#4b8be9"/><path d="M0 72H65V81a6 6 0 0 1-6 6H6a6 6 0 0 1-6-6Z" fill="#1a55c2"/><text x="25" y="59" font-family="Liberation Sans" font-weight="bold" font-size="31" fill="#fff" text-anchor="middle">W</text></svg><div class="t">三年级语文上册<br>4 课文四 古诗三<br>首 知识点（部编<br>版）.docx</div></div>
<div class="it" style="left:673px;top:677px"><svg width="102" height="112"><path d="M19 1.5H76L100 26V104a4 4 0 0 1-4 4H23a4 4 0 0 1-4-4Z" fill="#f4f4f4" stroke="#9a9a9a" stroke-width="2"/><path d="M76 1.5V22a4 4 0 0 0 4 4H100" fill="none" stroke="#9a9a9a" stroke-width="2"/><g fill="#dde3ec"><rect x="68" y="55" width="20" height="5"/><rect x="68" y="66" width="20" height="5"/><rect x="68" y="77" width="20" height="5"/><rect x="30" y="91" width="58" height="5"/></g><rect x="0" y="23" width="65" height="64" rx="6" fill="#2b6fd9"/><path d="M47 23H59a6 6 0 0 1 6 6V72H47Z" fill="#4b8be9"/><path d="M0 72H65V81a6 6 0 0 1-6 6H6a6 6 0 0 1-6-6Z" fill="#1a55c2"/><text x="25" y="59" font-family="Liberation Sans" font-weight="bold" font-size="31" fill="#fff" text-anchor="middle">W</text></svg><div class="t">三年级语文上册<br>5 课文五 铺满金<br>色巴掌的水泥道<br>知识点（部编...</div></div>
<div class="it" style="left:833px;top:677px"><svg width="102" height="112"><path d="M19 1.5H76L100 26V104a4 4 0 0 1-4 4H23a4 4 0 0 1-4-4Z" fill="#f4f4f4" stroke="#9a9a9a" stroke-width="2"/><path d="M76 1.5V22a4 4 0 0 0 4 4H100" fill="none" stroke="#9a9a9a" stroke-width="2"/><g fill="#dde3ec"><rect x="68" y="55" width="20" height="5"/><rect x="68" y="66" width="20" height="5"/><rect x="68" y="77" width="20" height="5"/><rect x="30" y="91" width="58" height="5"/></g><rect x="0" y="23" width="65" height="64" rx="6" fill="#2b6fd9"/><path d="M47 23H59a6 6 0 0 1 6 6V72H47Z" fill="#4b8be9"/><path d="M0 72H65V81a6 6 0 0 1-6 6H6a6 6 0 0 1-6-6Z" fill="#1a55c2"/><text x="25" y="59" font-family="Liberation Sans" font-weight="bold" font-size="31" fill="#fff" text-anchor="middle">W</text></svg><div class="t">三年级语文上册<br>6 课文六 秋天的<br>雨 知识点（部编<br>版）.docx</div></div>

<div class="it" style="left:35px;top:902px"><svg width="102" height="112"><path d="M19 1.5H76L100 26V104a4 4 0 0 1-4 4H23a4 4 0 0 1-4-4Z" fill="#f4f4f4" stroke="#9a9a9a" stroke-width="2"/><path d="M76 1.5V22a4 4 0 0 0 4 4H100" fill="none" stroke="#9a9a9a" stroke-width="2"/><g fill="#dde3ec"><rect x="68" y="55" width="20" height="5"/><rect x="68" y="66" width="20" height="5"/><rect x="68" y="77" width="20" height="5"/></g><rect x="0" y="23" width="65" height="64" rx="6" fill="#2b6fd9"/><path d="M47 23H59a6 6 0 0 1 6 6V72H47Z" fill="#4b8be9"/><path d="M0 72H65V81a6 6 0 0 1-6 6H6a6 6 0 0 1-6-6Z" fill="#1a55c2"/><text x="25" y="59" font-family="Liberation Sans" font-weight="bold" font-size="31" fill="#fff" text-anchor="middle">W</text></svg></div>
<div class="it" style="left:195px;top:902px"><svg width="102" height="112"><path d="M19 1.5H76L100 26V104a4 4 0 0 1-4 4H23a4 4 0 0 1-4-4Z" fill="#f4f4f4" stroke="#9a9a9a" stroke-width="2"/><path d="M76 1.5V22a4 4 0 0 0 4 4H100" fill="none" stroke="#9a9a9a" stroke-width="2"/><g fill="#dde3ec"><rect x="68" y="55" width="20" height="5"/><rect x="68" y="66" width="20" height="5"/><rect x="68" y="77" width="20" height="5"/></g><rect x="0" y="23" width="65" height="64" rx="6" fill="#2b6fd9"/><path d="M47 23H59a6 6 0 0 1 6 6V72H47Z" fill="#4b8be9"/><path d="M0 72H65V81a6 6 0 0 1-6 6H6a6 6 0 0 1-6-6Z" fill="#1a55c2"/><text x="25" y="59" font-family="Liberation Sans" font-weight="bold" font-size="31" fill="#fff" text-anchor="middle">W</text></svg></div>
<div class="it" style="left:354px;top:902px"><svg width="102" height="112"><path d="M19 1.5H76L100 26V104a4 4 0 0 1-4 4H23a4 4 0 0 1-4-4Z" fill="#f4f4f4" stroke="#9a9a9a" stroke-width="2"/><path d="M76 1.5V22a4 4 0 0 0 4 4H100" fill="none" stroke="#9a9a9a" stroke-width="2"/><g fill="#dde3ec"><rect x="68" y="55" width="20" height="5"/><rect x="68" y="66" width="20" height="5"/><rect x="68" y="77" width="20" height="5"/></g><rect x="0" y="23" width="65" height="64" rx="6" fill="#2b6fd9"/><path d="M47 23H59a6 6 0 0 1 6 6V72H47Z" fill="#4b8be9"/><path d="M0 72H65V81a6 6 0 0 1-6 6H6a6 6 0 0 1-6-6Z" fill="#1a55c2"/><text x="25" y="59" font-family="Liberation Sans" font-weight="bold" font-size="31" fill="#fff" text-anchor="middle">W</text></svg></div>
<div class="it" style="left:514px;top:902px"><svg width="102" height="112"><path d="M19 1.5H76L100 26V104a4 4 0 0 1-4 4H23a4 4 0 0 1-4-4Z" fill="#f4f4f4" stroke="#9a9a9a" stroke-width="2"/><path d="M76 1.5V22a4 4 0 0 0 4 4H100" fill="none" stroke="#9a9a9a" stroke-width="2"/><g fill="#dde3ec"><rect x="68" y="55" width="20" height="5"/><rect x="68" y="66" width="20" height="5"/><rect x="68" y="77" width="20" height="5"/></g><rect x="0" y="23" width="65" height="64" rx="6" fill="#2b6fd9"/><path d="M47 23H59a6 6 0 0 1 6 6V72H47Z" fill="#4b8be9"/><path d="M0 72H65V81a6 6 0 0 1-6 6H6a6 6 0 0 1-6-6Z" fill="#1a55c2"/><text x="25" y="59" font-family="Liberation Sans" font-weight="bold" font-size="31" fill="#fff" text-anchor="middle">W</text></svg></div>
<div class="it" style="left:673px;top:902px"><svg width="102" height="112"><path d="M19 1.5H76L100 26V104a4 4 0 0 1-4 4H23a4 4 0 0 1-4-4Z" fill="#f4f4f4" stroke="#9a9a9a" stroke-width="2"/><path d="M76 1.5V22a4 4 0 0 0 4 4H100" fill="none" stroke="#9a9a9a" stroke-width="2"/><g fill="#dde3ec"><rect x="68" y="55" width="20" height="5"/><rect x="68" y="66" width="20" height="5"/><rect x="68" y="77" width="20" height="5"/></g><rect x="0" y="23" width="65" height="64" rx="6" fill="#2b6fd9"/><path d="M47 23H59a6 6 0 0 1 6 6V72H47Z" fill="#4b8be9"/><path d="M0 72H65V81a6 6 0 0 1-6 6H6a6 6 0 0 1-6-6Z" fill="#1a55c2"/><text x="25" y="59" font-family="Liberation Sans" font-weight="bold" font-size="31" fill="#fff" text-anchor="middle">W</text></svg></div>
<div class="it" style="left:833px;top:902px"><svg width="102" height="112"><path d="M19 1.5H76L100 26V104a4 4 0 0 1-4 4H23a4 4 0 0 1-4-4Z" fill="#f4f4f4" stroke="#9a9a9a" stroke-width="2"/><path d="M76 1.5V22a4 4 0 0 0 4 4H100" fill="none" stroke="#9a9a9a" stroke-width="2"/><g fill="#dde3ec"><rect x="68" y="55" width="20" height="5"/><rect x="68" y="66" width="20" height="5"/><rect x="68" y="77" width="20" height="5"/></g><rect x="0" y="23" width="65" height="64" rx="6" fill="#2b6fd9"/><path d="M47 23H59a6 6 0 0 1 6 6V72H47Z" fill="#4b8be9"/><path d="M0 72H65V81a6 6 0 0 1-6 6H6a6 6 0 0 1-6-6Z" fill="#1a55c2"/><text x="25" y="59" font-family="Liberation Sans" font-weight="bold" font-size="31" fill="#fff" text-anchor="middle">W</text></svg></div>

<div class="it" style="left:1028px;top:785px"><svg width="102" height="112"><path d="M19 1.5H76L100 26V104a4 4 0 0 1-4 4H23a4 4 0 0 1-4-4Z" fill="#f4f4f4" stroke="#9a9a9a" stroke-width="2"/><path d="M76 1.5V22a4 4 0 0 0 4 4H100" fill="none" stroke="#9a9a9a" stroke-width="2"/><g fill="#dde3ec"><rect x="68" y="55" width="20" height="5"/><rect x="68" y="66" width="20" height="5"/><rect x="68" y="77" width="20" height="5"/><rect x="30" y="91" width="58" height="5"/></g><rect x="0" y="23" width="65" height="64" rx="6" fill="#2b6fd9"/><path d="M47 23H59a6 6 0 0 1 6 6V72H47Z" fill="#4b8be9"/><path d="M0 72H65V81a6 6 0 0 1-6 6H6a6 6 0 0 1-6-6Z" fill="#1a55c2"/><text x="25" y="59" font-family="Liberation Sans" font-weight="bold" font-size="31" fill="#fff" text-anchor="middle">W</text></svg><div class="t" style="top:121px">七下期末模拟卷1<br>（解析版）.docx</div></div>
<div class="it" style="left:1194px;top:785px"><svg width="102" height="112"><path d="M19 1.5H76L100 26V104a4 4 0 0 1-4 4H23a4 4 0 0 1-4-4Z" fill="#f4f4f4" stroke="#9a9a9a" stroke-width="2"/><path d="M76 1.5V22a4 4 0 0 0 4 4H100" fill="none" stroke="#9a9a9a" stroke-width="2"/><g fill="#dde3ec"><rect x="68" y="55" width="20" height="5"/><rect x="68" y="66" width="20" height="5"/><rect x="68" y="77" width="20" height="5"/><rect x="30" y="91" width="58" height="5"/></g><rect x="0" y="23" width="65" height="64" rx="6" fill="#2b6fd9"/><path d="M47 23H59a6 6 0 0 1 6 6V72H47Z" fill="#4b8be9"/><path d="M0 72H65V81a6 6 0 0 1-6 6H6a6 6 0 0 1-6-6Z" fill="#1a55c2"/><text x="25" y="59" font-family="Liberation Sans" font-weight="bold" font-size="31" fill="#fff" text-anchor="middle">W</text></svg><div class="t" style="top:121px">七下期末模拟卷1<br>（原卷版）.docx</div></div>
<div class="it" style="left:1360px;top:785px"><svg width="102" height="112"><path d="M19 1.5H76L100 26V104a4 4 0 0 1-4 4H23a4 4 0 0 1-4-4Z" fill="#f4f4f4" stroke="#9a9a9a" stroke-width="2"/><path d="M76 1.5V22a4 4 0 0 0 4 4H100" fill="none" stroke="#9a9a9a" stroke-width="2"/><g fill="#dde3ec"><rect x="68" y="55" width="20" height="5"/><rect x="68" y="66" width="20" height="5"/><rect x="68" y="77" width="20" height="5"/><rect x="30" y="91" width="58" height="5"/></g><rect x="0" y="23" width="65" height="64" rx="6" fill="#2b6fd9"/><path d="M47 23H59a6 6 0 0 1 6 6V72H47Z" fill="#4b8be9"/><path d="M0 72H65V81a6 6 0 0 1-6 6H6a6 6 0 0 1-6-6Z" fill="#1a55c2"/><text x="25" y="59" font-family="Liberation Sans" font-weight="bold" font-size="31" fill="#fff" text-anchor="middle">W</text></svg><div class="t" style="top:121px">七下期末模拟卷2<br>（解析版）.docx</div></div>
<div class="it" style="left:1526px;top:785px"><svg width="102" height="112"><path d="M19 1.5H76L100 26V104a4 4 0 0 1-4 4H23a4 4 0 0 1-4-4Z" fill="#f4f4f4" stroke="#9a9a9a" stroke-width="2"/><path d="M76 1.5V22a4 4 0 0 0 4 4H100" fill="none" stroke="#9a9a9a" stroke-width="2"/><g fill="#dde3ec"><rect x="68" y="55" width="20" height="5"/><rect x="68" y="66" width="20" height="5"/><rect x="68" y="77" width="20" height="5"/><rect x="30" y="91" width="58" height="5"/></g><rect x="0" y="23" width="65" height="64" rx="6" fill="#2b6fd9"/><path d="M47 23H59a6 6 0 0 1 6 6V72H47Z" fill="#4b8be9"/><path d="M0 72H65V81a6 6 0 0 1-6 6H6a6 6 0 0 1-6-6Z" fill="#1a55c2"/><text x="25" y="59" font-family="Liberation Sans" font-weight="bold" font-size="31" fill="#fff" text-anchor="middle">W</text></svg><div class="t" style="top:121px">七下期末模拟卷2<br>（原卷版）.docx</div></div>
<div class="it" style="left:1692px;top:785px"><svg width="102" height="112"><path d="M19 1.5H76L100 26V104a4 4 0 0 1-4 4H23a4 4 0 0 1-4-4Z" fill="#f4f4f4" stroke="#9a9a9a" stroke-width="2"/><path d="M76 1.5V22a4 4 0 0 0 4 4H100" fill="none" stroke="#9a9a9a" stroke-width="2"/><g fill="#dde3ec"><rect x="68" y="55" width="20" height="5"/><rect x="68" y="66" width="20" height="5"/><rect x="68" y="77" width="20" height="5"/><rect x="30" y="91" width="58" height="5"/></g><rect x="0" y="23" width="65" height="64" rx="6" fill="#2b6fd9"/><path d="M47 23H59a6 6 0 0 1 6 6V72H47Z" fill="#4b8be9"/><path d="M0 72H65V81a6 6 0 0 1-6 6H6a6 6 0 0 1-6-6Z" fill="#1a55c2"/><text x="25" y="59" font-family="Liberation Sans" font-weight="bold" font-size="31" fill="#fff" text-anchor="middle">W</text></svg><div class="t" style="top:121px">期末测试卷01-<br>七年级下道德与<br>法治期末冲刺专<br>项训练（解析...</div></div>
<div class="it" style="left:1858px;top:785px"><svg width="102" height="112"><path d="M19 1.5H76L100 26V104a4 4 0 0 1-4 4H23a4 4 0 0 1-4-4Z" fill="#f4f4f4" stroke="#9a9a9a" stroke-width="2"/><path d="M76 1.5V22a4 4 0 0 0 4 4H100" fill="none" stroke="#9a9a9a" stroke-width="2"/><g fill="#dde3ec"><rect x="68" y="55" width="20" height="5"/><rect x="68" y="66" width="20" height="5"/><rect x="68" y="77" width="20" height="5"/><rect x="30" y="91" width="58" height="5"/></g><rect x="0" y="23" width="65" height="64" rx="6" fill="#2b6fd9"/><path d="M47 23H59a6 6 0 0 1 6 6V72H47Z" fill="#4b8be9"/><path d="M0 72H65V81a6 6 0 0 1-6 6H6a6 6 0 0 1-6-6Z" fill="#1a55c2"/><text x="25" y="59" font-family="Liberation Sans" font-weight="bold" font-size="31" fill="#fff" text-anchor="middle">W</text></svg><div class="t" style="top:121px">期末测试卷01-<br>七年级下道德与<br>法治期末冲刺专<br>项训练（原卷...</div></div>

<div class="clip" style="left:1690px;top:895px;width:310px;height:105px">
<div class="wm" style="left:18px;top:5px;font-size:38px;line-height:44px">zhipinquan.com</div>
<div class="wm" style="left:8px;top:55px;font-size:33px;line-height:42px">品力资源网免费下载</div>
</div>
</body></html>
